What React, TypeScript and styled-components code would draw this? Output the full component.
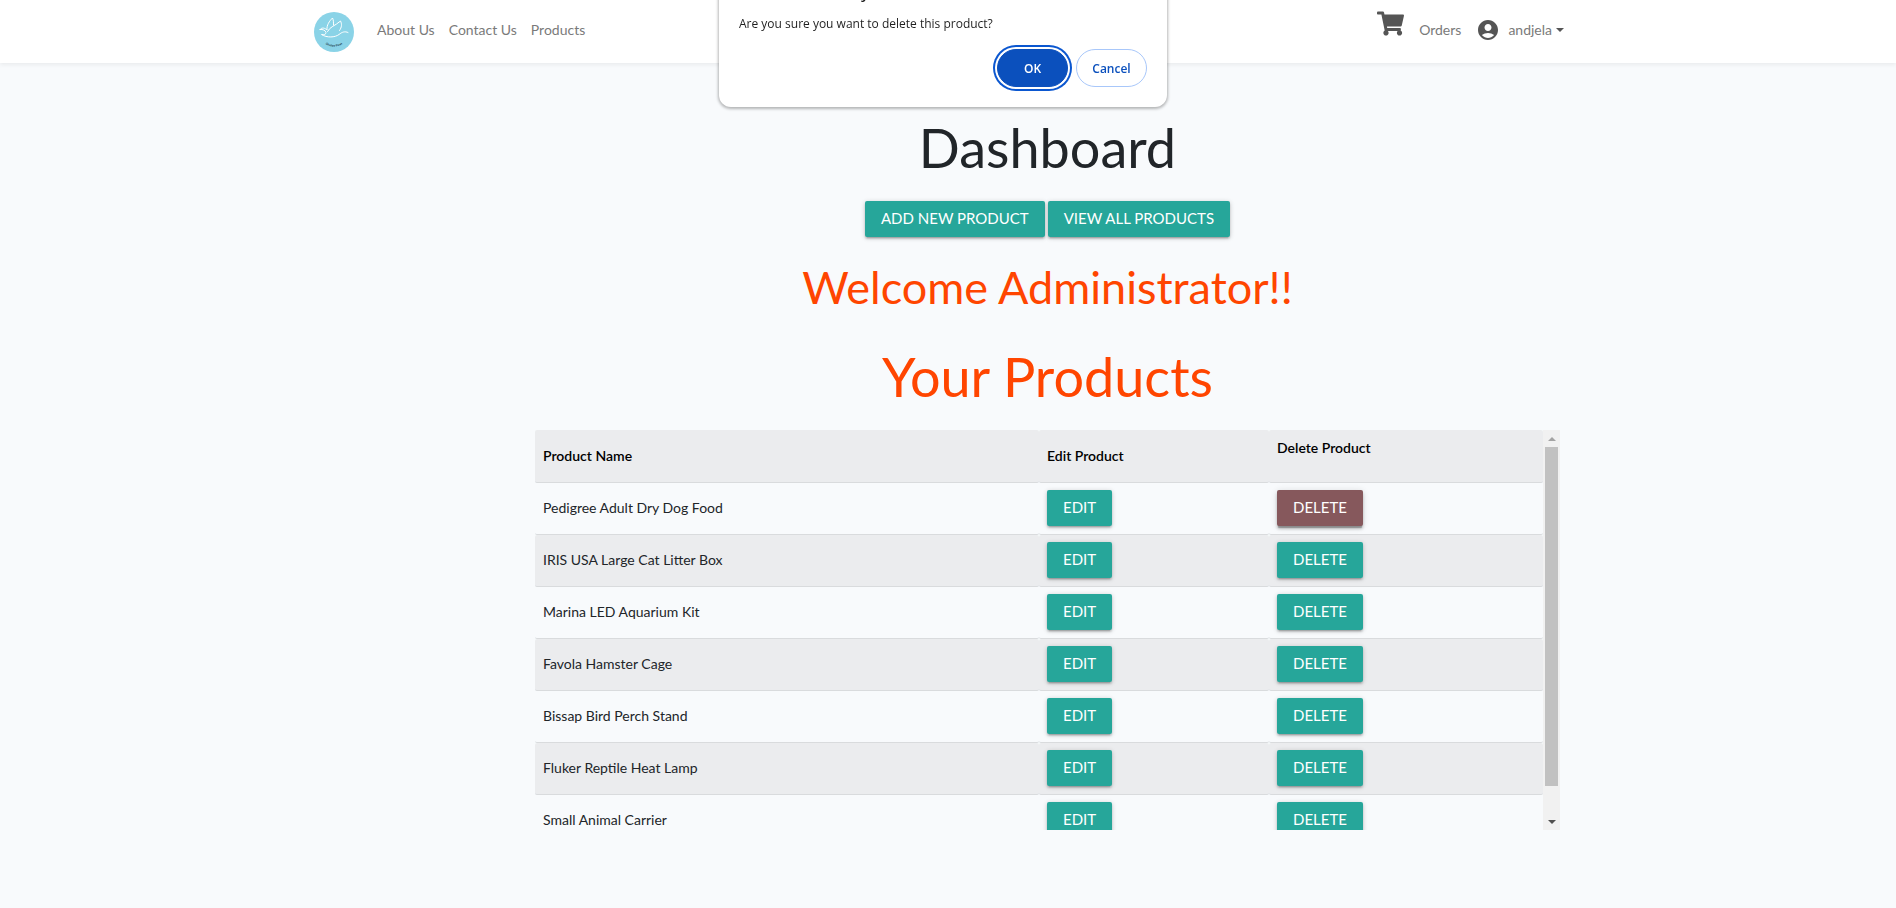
import React, { useState } from 'react';
import styled, { createGlobalStyle } from 'styled-components';
import { FaShoppingCart } from 'react-icons/fa';
import { MdAccountCircle } from 'react-icons/md';

const GlobalStyle = createGlobalStyle`
  *, *::before, *::after { box-sizing: border-box; }
  body {
    margin: 0;
    background: #f8fafc;
    color: #212529;
    font-family: Lato, 'Liberation Sans', sans-serif;
    font-size: 14px;
    line-height: 20px;
  }
`;

const Header = styled.header`
  background: #fff;
  box-shadow: 0 2px 4px rgba(0, 0, 0, 0.06);
`;

const NavBar = styled.nav`
  display: flex;
  align-items: center;
  justify-content: space-between;
  max-width: 1280px;
  height: 63px;
  margin: 0 auto;
  padding: 0 24px 4px 6px;
`;

const NavGroup = styled.div<{ $gap: number }>`
  display: flex;
  align-items: center;
  gap: ${({ $gap }) => $gap}px;
`;

const BrandLink = styled.a`
  display: block;
  height: 40px;
  margin: 4px 9px 0 0;
`;

const NavLink = styled.a`
  display: flex;
  align-items: center;
  color: #7a7a7a;
  text-decoration: none;
`;

const CartLink = styled(NavLink)`
  color: #555;
  height: 40px;
  align-items: flex-start;
`;

const AccountIcon = styled(MdAccountCircle)`
  color: #555;
  margin-right: 8px;
`;

const Caret = styled.span`
  margin-left: 4px;
  border-top: 4px solid #555;
  border-left: 4px solid transparent;
  border-right: 4px solid transparent;
`;

const Main = styled.main`
  max-width: 1280px;
  margin: 0 auto;
  padding: 55px 28px 78px 227px;
  text-align: center;
`;

const Title = styled.h1<{ $accent?: boolean }>`
  margin: 0;
  font-size: 54px;
  line-height: 60px;
  font-weight: 400;
  color: ${({ $accent }) => ($accent ? '#ff4500' : '#212529')};
`;

const Welcome = styled.h2`
  margin: 25px 0 35px;
  font-size: 45px;
  line-height: 50px;
  font-weight: 400;
  color: #ff4500;
`;

const Actions = styled.div`
  display: flex;
  justify-content: center;
  gap: 3px;
  margin-top: 23px;
`;

const Button = styled.button<{ $active?: boolean }>`
  display: inline-block;
  height: 36px;
  padding: 0 16px 2px;
  border: 0;
  border-radius: 2px;
  background: ${({ $active }) => ($active ? '#86585c' : '#26a69a')};
  color: #fff;
  font-family: inherit;
  font-size: 15px;
  line-height: 34px;
  text-transform: uppercase;
  white-space: nowrap;
  vertical-align: top;
  cursor: pointer;
  box-shadow: ${({ $active }) =>
    $active
      ? '0 3px 3px rgba(0, 0, 0, 0.2), 0 1px 7px rgba(0, 0, 0, 0.14), 0 3px 1px -1px rgba(0, 0, 0, 0.25)'
      : '0 2px 2px rgba(0, 0, 0, 0.14), 0 3px 1px -2px rgba(0, 0, 0, 0.12), 0 1px 5px rgba(0, 0, 0, 0.2)'};
`;

const TablePanel = styled.section`
  display: flex;
  height: 400px;
  margin-top: 23px;
  text-align: left;
`;

const TableScroller = styled.div`
  flex: 1;
  overflow-y: auto;
  scrollbar-width: none;
`;

const Table = styled.table`
  width: 100%;
  margin-bottom: 16px;
  table-layout: fixed;
  border-collapse: separate;
  border-spacing: 0;
`;

const Column = styled.col<{ $width?: number }>`
  width: ${({ $width }) => ($width ? `${$width}px` : 'auto')};
`;

const HeadCell = styled.th<{ $raised?: boolean }>`
  height: 53px;
  padding: 8px;
  border-bottom: 1px solid #d9dbdd;
  border-radius: 2px;
  background: #ebecee;
  color: #000;
  font-weight: 600;
  text-align: left;
  vertical-align: ${({ $raised }) => ($raised ? 'top' : 'middle')};
`;

const Row = styled.tr`
  &:nth-child(even) td { background: #ebecee; }
`;

const Cell = styled.td`
  padding: 7px 8px 8px;
  border-bottom: 1px solid #d9dbdd;
  border-radius: 2px;
  color: #212529;
`;

const ScrollTrack = styled.div`
  display: flex;
  flex-direction: column;
  align-items: center;
  width: 17px;
  background: #f1f1f1;
`;

const ScrollArrow = styled.span<{ $down?: boolean }>`
  display: flex;
  align-items: center;
  justify-content: center;
  height: 17px;
  &::after {
    content: '';
    border: solid transparent;
    border-width: ${({ $down }) => ($down ? '4px 4px 0' : '0 4px 4px')};
    border-top-color: ${({ $down }) => ($down ? '#505050' : 'transparent')};
    border-bottom-color: ${({ $down }) => ($down ? 'transparent' : '#a3a3a3')};
  }
`;

const ScrollLane = styled.div`
  flex: 1;
  width: 13px;
`;

const ScrollThumb = styled.div`
  height: 339px;
  background: #c1c1c1;
`;

const Dialog = styled.div`
  position: fixed;
  top: -37px;
  left: calc(50% - 229px);
  width: 448px;
  padding: 20px;
  border-radius: 12px;
  background: #fff;
  color: #1f1f1f;
  box-shadow: 0 1px 3px 1px rgba(0, 0, 0, 0.28);
  font-family: 'Open Sans', 'Noto Sans', sans-serif;
  font-size: 12px;
`;

const DialogTitle = styled.h2`
  margin: 0 0 11px;
  font-size: 15px;
  line-height: 20px;
  font-weight: 600;
`;

const DialogText = styled.p`
  margin: 0 0 15px;
`;

const DialogActions = styled.div`
  display: flex;
  justify-content: flex-end;
  gap: 8px;
`;

const DialogButton = styled.button<{ $primary?: boolean }>`
  width: 71px;
  height: 38px;
  padding: 0;
  border: 1px solid ${({ $primary }) => ($primary ? '#0b50bd' : '#a8c7fa')};
  border-radius: 19px;
  background: ${({ $primary }) => ($primary ? '#0b50bd' : '#fff')};
  color: ${({ $primary }) => ($primary ? '#fff' : '#0b50bd')};
  font: 600 12px 'Open Sans', 'Noto Sans', sans-serif;
  box-shadow: ${({ $primary }) => ($primary ? '0 0 0 2px #fff, 0 0 0 4px #0b57d0' : 'none')};
  outline: 0;
`;

const Logo = () => (
  <svg width="40" height="40" viewBox="0 0 40 40" role="img" aria-label="Home">
    <circle cx="20" cy="20" r="20" fill="#8ad3e7" />
    <g fill="none" stroke="#fff" strokeWidth="1" strokeLinecap="round" strokeLinejoin="round">
      <path d="M6 17.5 C8 15 11 16 13 18 C12.500 13 15.500 9 18.500 6 C19.500 8 19.500 10 19.500 13" />
      <path d="M13.500 19.500 C16 14.500 21 14 26.500 9 C28 12 28 15 25.500 18.500" />
      <path d="M6 17.500 C9 17 11.500 18.500 12 20.500 C12 22.500 10 23 7.500 22.500 C13 26 21 25.500 25 22.500 C28 20 31 19 34 20.500" />
    </g>
    <path id="logo-arc" d="M8 30 Q20 39 32 30" fill="none" />
    <text fontSize="3" fontWeight="700" fill="#24424b">
      <textPath href="#logo-arc" startOffset="50%" textAnchor="middle">Chuppy Paws</textPath>
    </text>
  </svg>
);

const products = [
  'Pedigree Adult Dry Dog Food',
  'IRIS USA Large Cat Litter Box',
  'Marina LED Aquarium Kit',
  'Favola Hamster Cage',
  'Bissap Bird Perch Stand',
  'Fluker Reptile Heat Lamp',
  'Small Animal Carrier',
];

export default function App() {
  const [pending, setPending] = useState<string | null>(products[0]);
  const [scrollTop, setScrollTop] = useState(0);
  const close = () => setPending(null);

  return (
    <>
      <GlobalStyle />
      <Header>
        <NavBar>
          <NavGroup $gap={14}>
            <BrandLink href="#"><Logo /></BrandLink>
            <NavLink href="#about">About Us</NavLink>
            <NavLink href="#contact">Contact Us</NavLink>
            <NavLink href="#products">Products</NavLink>
          </NavGroup>
          <NavGroup $gap={15}>
            <CartLink href="#cart" aria-label="Cart"><FaShoppingCart size={27} /></CartLink>
            <NavLink href="#orders">Orders</NavLink>
            <NavLink href="#account"><AccountIcon size={24} />andjela<Caret /></NavLink>
          </NavGroup>
        </NavBar>
      </Header>

      <Main>
        <Title>Dashboard</Title>
        <Actions>
          <Button>Add new product</Button>
          <Button>View all products</Button>
        </Actions>
        <Welcome>Welcome Administrator!!</Welcome>
        <Title as="h2" $accent>Your Products</Title>
        <TablePanel>
          <TableScroller onScroll={(e) => setScrollTop(e.currentTarget.scrollTop)}>
            <Table>
              <colgroup>
                <Column />
                <Column $width={230} />
                <Column $width={274} />
              </colgroup>
              <thead>
                <tr>
                  <HeadCell scope="col">Product Name</HeadCell>
                  <HeadCell scope="col">Edit Product</HeadCell>
                  <HeadCell scope="col" $raised>Delete Product</HeadCell>
                </tr>
              </thead>
              <tbody>
                {products.map((name) => (
                  <Row key={name}>
                    <Cell>{name}</Cell>
                    <Cell><Button>Edit</Button></Cell>
                    <Cell>
                      <Button $active={name === pending} onClick={() => setPending(name)}>Delete</Button>
                    </Cell>
                  </Row>
                ))}
              </tbody>
            </Table>
          </TableScroller>
          <ScrollTrack aria-hidden="true">
            <ScrollArrow />
            <ScrollLane>
              <ScrollThumb style={{ marginTop: Math.min(27, Math.round(scrollTop * 0.82)) }} />
            </ScrollLane>
            <ScrollArrow $down />
          </ScrollTrack>
        </TablePanel>
      </Main>

      {pending && (
        <Dialog role="alertdialog" aria-labelledby="dialog-title" aria-describedby="dialog-text">
          <DialogTitle id="dialog-title">127.0.0.1:8000 says</DialogTitle>
          <DialogText id="dialog-text">Are you sure you want to delete this product?</DialogText>
          <DialogActions>
            <DialogButton $primary onClick={close}>OK</DialogButton>
            <DialogButton onClick={close}>Cancel</DialogButton>
          </DialogActions>
        </Dialog>
      )}
    </>
  );
}
